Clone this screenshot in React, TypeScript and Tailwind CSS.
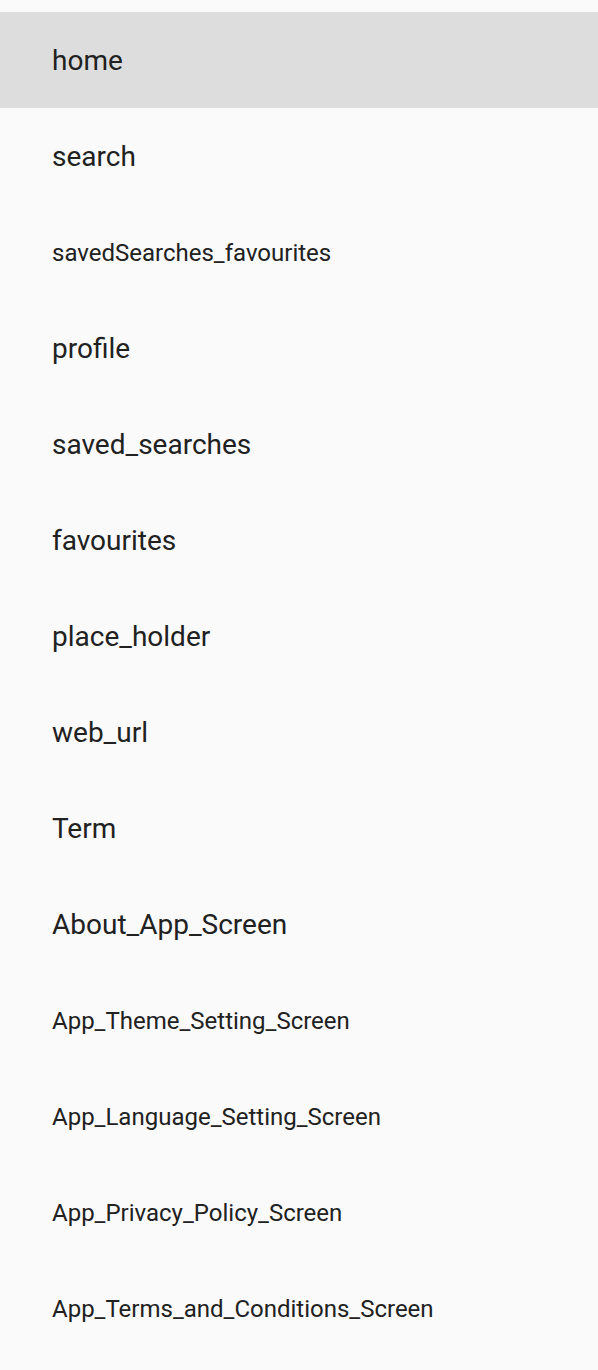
import React from "react";

const items: { label: string; small?: boolean }[] = [
  { label: "home" },
  { label: "search" },
  { label: "savedSearches_favourites", small: true },
  { label: "profile" },
  { label: "saved_searches" },
  { label: "favourites" },
  { label: "place_holder" },
  { label: "web_url" },
  { label: "Term" },
  { label: "About_App_Screen" },
  { label: "App_Theme_Setting_Screen", small: true },
  { label: "App_Language_Setting_Screen", small: true },
  { label: "App_Privacy_Policy_Screen", small: true },
  { label: "App_Terms_and_Conditions_Screen", small: true },
];

export default function App() {
  return (
    <div
      className="w-[598px] h-[1370px] bg-[#fafafa] pt-[12px] text-[#212121]"
      style={{ fontFamily: "Roboto, 'Liberation Sans', sans-serif" }}
    >
      {items.map((it, i) => (
        <div
          key={it.label}
          className={`h-[96px] flex items-center pl-[52px] pt-[2px] ${i === 0 ? "bg-[#dddddd]" : ""}`}
        >
          <span className={it.small ? "text-[24px] leading-none" : "text-[28px] leading-none"}>
            {it.label}
          </span>
        </div>
      ))}
    </div>
  );
}
